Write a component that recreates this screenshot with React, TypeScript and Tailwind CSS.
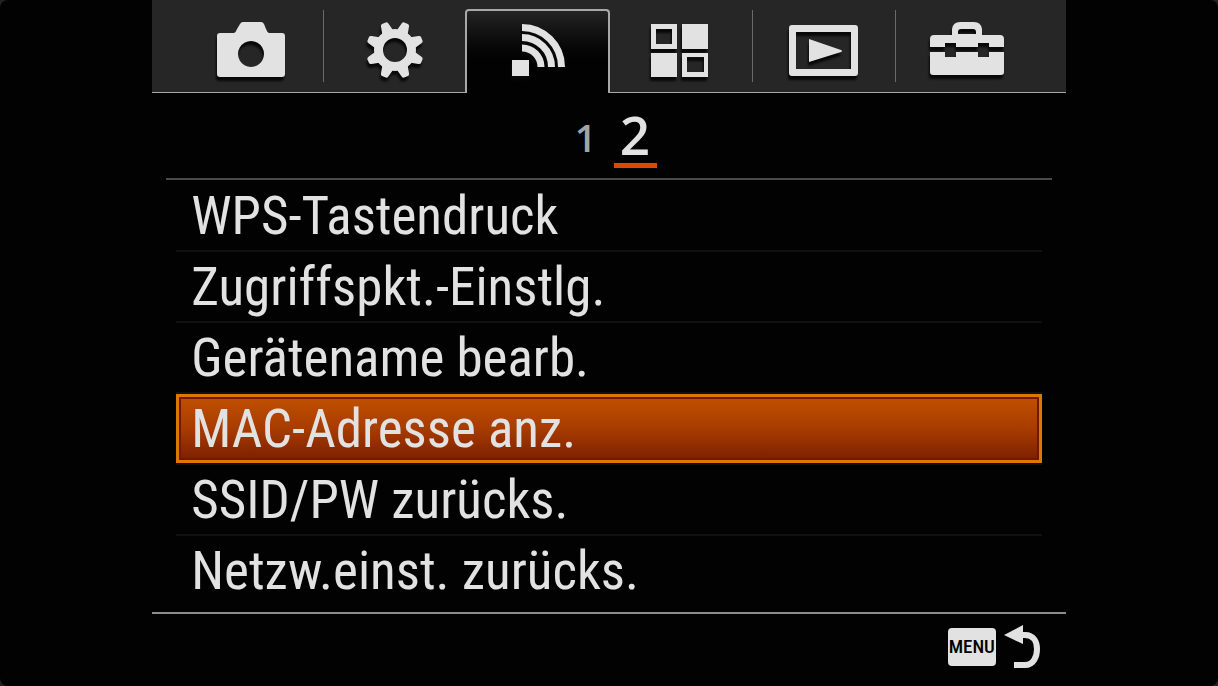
import { useState, type ReactNode } from "react";

interface Tab {
  id: string;
  label: string;
  divider?: boolean;
  icon: ReactNode;
}

const GEAR_ANGLES = [22.5, 67.5, 112.5, 157.5, 202.5, 247.5, 292.5, 337.5];

const TABS: Tab[] = [
  {
    id: "camera",
    label: "Kamera",
    icon: (
      <path
        fillRule="evenodd"
        d="M8 13H22Q24 12 25 9L28 4Q29 2 31 2H49Q51 2 52 4L54 9Q55 12 57 13H70Q73 13 73 16V54Q73 57 70 57H8Q5 57 5 54V16Q5 13 8 13ZM39 21a13 13 0 1 0 .01 0Z"
      />
    ),
  },
  {
    id: "custom",
    label: "Benutzer",
    divider: true,
    icon: (
      <>
        <circle cx="40" cy="30" r="16.5" fill="none" stroke="currentColor" strokeWidth="9" />
        {GEAR_ANGLES.map((angle) => (
          <path
            key={angle}
            d="M34 12L36 3Q36.500 1 38 1H42Q43.500 1 44 3L46 12Z"
            transform={`rotate(${angle} 40 30)`}
          />
        ))}
      </>
    ),
  },
  {
    id: "wireless",
    label: "Drahtlos",
    icon: (
      <>
        <path d="M14 40H31V56H14Z" />
        <g fill="none" stroke="currentColor" strokeWidth="7">
          <path d="M24 7.500A39.500 39.500 0 0 1 63.500 47" />
          <path d="M24 17.500A29.500 29.500 0 0 1 53.500 47" />
          <path d="M24 28A19 19 0 0 1 43 47" />
        </g>
      </>
    ),
  },
  {
    id: "apps",
    label: "Applikation",
    icon: (
      <path
        fillRule="evenodd"
        d="M11 4H37V29H11ZM16 9V24H32V9ZM42 4H68V29H42ZM11 33H37V57H11ZM42 33H68V57H42ZM47 37V52H64V37Z"
      />
    ),
  },
  {
    id: "playback",
    label: "Wiedergabe",
    divider: true,
    icon: (
      <path
        fillRule="evenodd"
        d="M8 5H71Q74 5 74 8V53Q74 56 71 56H8Q5 56 5 53V8Q5 5 8 5ZM12 12V49H67V12ZM25 19L57 30Q59 31 57 32L25 42Z"
      />
    ),
  },
  {
    id: "setup",
    label: "Einstellung",
    divider: true,
    icon: (
      <>
        <path
          fillRule="evenodd"
          d="M25 15V9Q26 2 33 2H47Q54 2 55 9V15ZM31 14H49V12Q49 9 46 9H34Q31 9 31 12Z"
        />
        <path d="M7 15H73Q77 15 77 19V27H62V23H51V27H29V23H18V27H3V19Q3 15 7 15Z" />
        <path d="M3 32H18V37H29V32H51V37H62V32H77V52Q77 55 74 55H6Q3 55 3 52Z" />
      </>
    ),
  },
];

const PAGES = [1, 2];

const ITEMS = [
  "WPS-Tastendruck",
  "Zugriffspkt.-Einstlg.",
  "Gerätename bearb.",
  "MAC-Adresse anz.",
  "SSID/PW zurücks.",
  "Netzw.einst. zurücks.",
];

export default function App() {
  const [activeTab, setActiveTab] = useState("wireless");
  const [page, setPage] = useState(2);
  const [selected, setSelected] = useState(3);

  return (
    <div className="min-h-screen bg-[#222222]">
      <div className="flex min-h-screen justify-center rounded-lg bg-[#020202] font-['Roboto_Condensed',sans-serif] text-[#e2e2e2]">
        <main className="flex w-3/4 flex-col">
          <nav className="flex h-[93px] border-b border-[#a8a8a8] bg-[#262626] px-7">
            {TABS.map((tab) => {
              const active = tab.id === activeTab;
              return (
                <div key={tab.id} className="flex flex-1">
                  {tab.divider && <span className="mt-2.5 h-[72px] w-px bg-[#6a6a6a]" />}
                  <button
                    type="button"
                    aria-label={tab.label}
                    aria-pressed={active}
                    onClick={() => setActiveTab(tab.id)}
                    className={[
                      "flex flex-1 items-end justify-center",
                      active
                        ? "-mx-px mt-[9px] -mb-px rounded-t border-x-2 border-t-2 border-[#a8a8a8] bg-linear-to-b from-[#242424] to-[#020202] to-60% pb-[13px]"
                        : "pb-3",
                    ].join(" ")}
                  >
                    <svg
                      viewBox="0 0 80 60"
                      fill="currentColor"
                      className="h-[60px] w-20 overflow-visible drop-shadow-[-1px_4px_1px_#080808]"
                      aria-hidden
                    >
                      {tab.icon}
                    </svg>
                  </button>
                </div>
              );
            })}
          </nav>

          <div className="mx-3.5 flex h-[87px] items-end justify-center gap-4 border-b-2 border-[#4a4a4a] pb-2.5 pl-3 font-['Open_Sans',sans-serif] font-semibold">
            {PAGES.map((n) => (
              <button
                key={n}
                type="button"
                onClick={() => setPage(n)}
                className={
                  n === page
                    ? "w-[43px] border-b-[5px] border-[#d84a00] pb-2 text-[53px] leading-[40px]"
                    : "w-6 pb-4 text-[38px] leading-[30px] text-[#a4a4a4]"
                }
              >
                {n}
              </button>
            ))}
          </div>

          <ul className="mx-6 pt-px pb-[5px]">
            {ITEMS.map((item, index) => (
              <li key={item} className="h-[71px] border-b-2 border-[#101010] last:border-transparent">
                <button
                  type="button"
                  onClick={() => setSelected(index)}
                  className={[
                    "flex h-[69px] w-full items-center whitespace-nowrap border-[3px] pl-3 text-left text-[53px] leading-[64px]",
                    index === selected
                      ? "border-[#dc7800] bg-linear-to-b from-[#c05000] via-[#a83c00] to-[#7c2000] inset-shadow-[0_0_0_2px_#701800]"
                      : "border-transparent",
                  ].join(" ")}
                >
                  {item}
                </button>
              </li>
            ))}
          </ul>

          <footer className="flex items-start justify-end border-t-2 border-[#8c8c8c] pr-6 pt-2.5">
            <button type="button" aria-label="Zurück" className="flex gap-2">
              <span className="mt-1 flex h-[38px] w-12 items-center justify-center rounded bg-[#e2e2e2] text-[19px] leading-[38px] font-medium text-black">
                MENU
              </span>
              <svg viewBox="0 0 38 46" className="h-[46px] w-[38px]" fill="currentColor" aria-hidden>
                <path d="M0 11L19 1V20Z" />
                <path
                  d="M17 11H21C30 11 33 18 33 25S30 41 21 41H10"
                  fill="none"
                  stroke="currentColor"
                  strokeWidth="6"
                />
              </svg>
            </button>
          </footer>
        </main>
      </div>
    </div>
  );
}
